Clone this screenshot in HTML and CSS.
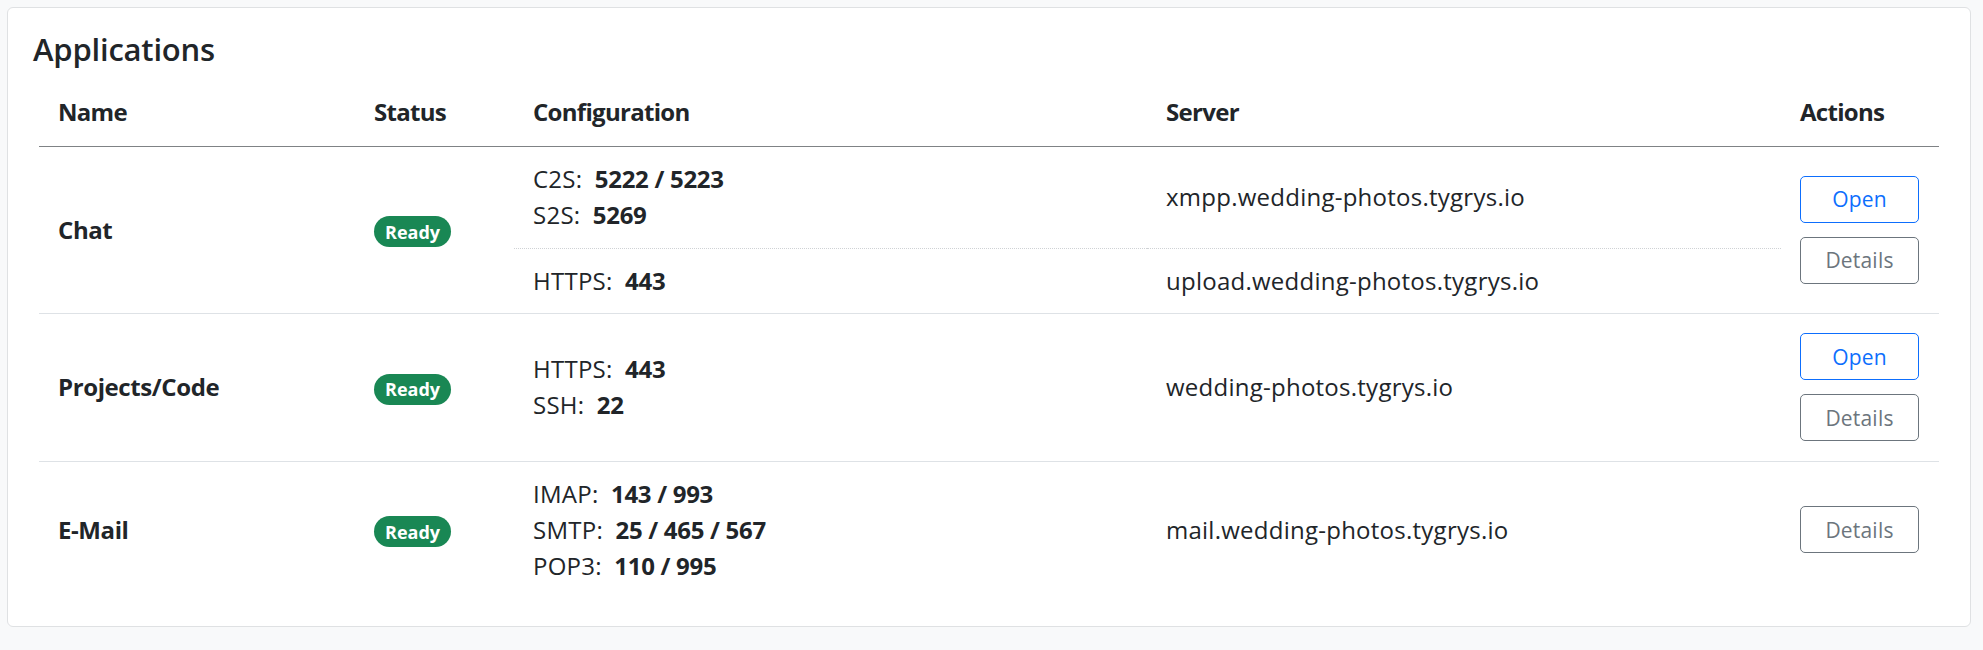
FILE: index.html
```html
<!DOCTYPE html>
<html lang="en">
<head>
<meta charset="utf-8">
<title>Applications</title>
<link rel="stylesheet" href="styles.css">
</head>
<body>
<div class="card">
  <h4 class="card-title">Applications</h4>
  <div class="table-wrap">
    <table class="apps">
      <colgroup>
        <col class="col-name">
        <col class="col-status">
        <col class="col-config">
        <col class="col-server">
        <col class="col-actions">
      </colgroup>
      <thead>
        <tr>
          <th>Name</th>
          <th>Status</th>
          <th>Configuration</th>
          <th>Server</th>
          <th>Actions</th>
        </tr>
      </thead>
      <tbody>
        <tr>
          <td rowspan="2" class="name row-end">Chat</td>
          <td rowspan="2" class="row-end"><span class="badge">Ready</span></td>
          <td class="config sub-end">
            <div class="cfg"><span class="lbl">C2S:</span> <b>5222 / 5223</b></div>
            <div class="cfg"><span class="lbl">S2S:</span> <b>5269</b></div>
          </td>
          <td class="server sub-end">xmpp.wedding-photos.tygrys.io</td>
          <td rowspan="2" class="actions row-end">
            <div class="btns">
              <button class="btn btn-open">Open</button>
              <button class="btn btn-details">Details</button>
            </div>
          </td>
        </tr>
        <tr>
          <td class="config row-end">
            <div class="cfg"><span class="lbl">HTTPS:</span> <b>443</b></div>
          </td>
          <td class="server row-end">upload.wedding-photos.tygrys.io</td>
        </tr>
        <tr>
          <td class="name row-end">Projects/Code</td>
          <td class="row-end"><span class="badge">Ready</span></td>
          <td class="config row-end">
            <div class="cfg"><span class="lbl">HTTPS:</span> <b>443</b></div>
            <div class="cfg"><span class="lbl">SSH:</span> <b>22</b></div>
          </td>
          <td class="server row-end">wedding-photos.tygrys.io</td>
          <td class="actions row-end">
            <div class="btns">
              <button class="btn btn-open">Open</button>
              <button class="btn btn-details">Details</button>
            </div>
          </td>
        </tr>
        <tr>
          <td class="name">E-Mail</td>
          <td><span class="badge">Ready</span></td>
          <td class="config">
            <div class="cfg"><span class="lbl">IMAP:</span> <b>143 / 993</b></div>
            <div class="cfg"><span class="lbl">SMTP:</span> <b>25 / 465 / 567</b></div>
            <div class="cfg"><span class="lbl">POP3:</span> <b>110 / 995</b></div>
          </td>
          <td class="server">mail.wedding-photos.tygrys.io</td>
          <td class="actions">
            <div class="btns">
              <button class="btn btn-details">Details</button>
            </div>
          </td>
        </tr>
      </tbody>
    </table>
  </div>
</div>
</body>
</html>
```

FILE: styles.css
```css
html, body {
  margin: 0;
  background: #f8f9fa;
}

body {
  padding: 7px 12px 24px 7px;
  font-family: "Open Sans", "Noto Sans", sans-serif;
  font-size: 24px;
  line-height: 36px;
  color: #212529;
  letter-spacing: 0.25px;
}

.card {
  background: #fff;
  border: 1px solid #dfe1e3;
  border-radius: 6px;
  padding: 22px 25px 28px;
}

.card-title {
  margin: 0 0 11px;
  font-size: 31px;
  line-height: 38px;
  font-weight: 600;
  letter-spacing: -0.2px;
}

.table-wrap {
  margin: 0 6px;
}

.apps {
  width: 100%;
  border-collapse: collapse;
  table-layout: fixed;
}

.col-name { width: 316px; }
.col-status { width: 159px; }
.col-config { width: 633px; }
.col-server { width: 634px; }
.col-actions { width: 158px; }

.apps th {
  text-align: left;
  font-weight: 700;
  letter-spacing: -0.7px;
  padding: 15px 19px 16px;
  border-bottom: 1px solid #7f8285;
}

.apps td {
  padding: 14px 19px 14.5px;
  vertical-align: middle;
}

.apps td.row-end {
  border-bottom: 1px solid #dee2e6;
}

.apps td.sub-end {
  border-bottom: 1px dotted #cfd2d5;
}

.name {
  font-weight: 700;
  letter-spacing: -0.4px;
}

.cfg b {
  font-weight: 700;
  letter-spacing: -0.3px;
}

.lbl {
  margin-right: 6px;
}

.badge {
  display: inline-flex;
  align-items: center;
  justify-content: center;
  height: 31px;
  padding: 0 11px;
  border-radius: 16px;
  background: #198754;
  color: #fff;
  font-size: 18px;
  font-weight: 700;
  line-height: 1;
  letter-spacing: 0;
}

.btns {
  display: flex;
  flex-direction: column;
  gap: 14px;
  margin: 5px 0;
}

.btn {
  display: flex;
  align-items: center;
  justify-content: center;
  width: 119px;
  height: 47px;
  box-sizing: border-box;
  background: #fff;
  border: 1px solid;
  border-radius: 5px;
  font-family: "Open Sans", "Noto Sans", sans-serif;
  font-size: 21px;
  letter-spacing: 0.2px;
  padding: 0;
}

.btn-open {
  color: #0d6efd;
  border-color: #0d6efd;
}

.btn-details {
  color: #6c757d;
  border-color: #6c757d;
}
```
